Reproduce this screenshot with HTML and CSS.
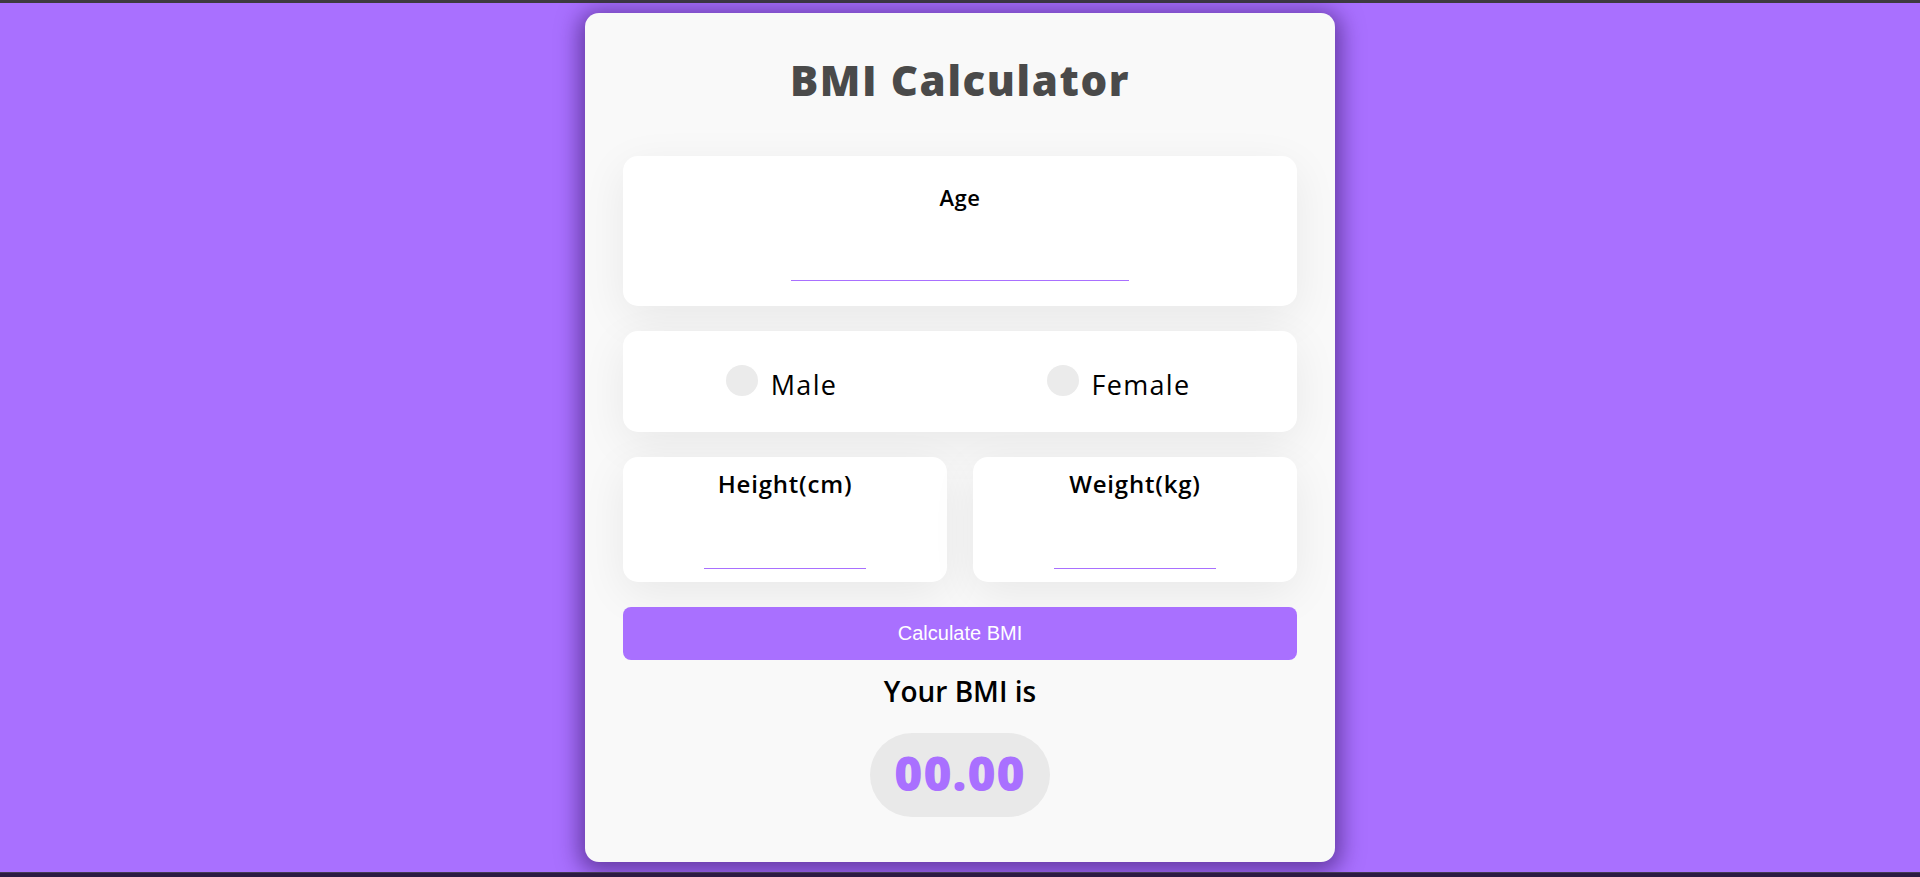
FILE: index.html
```html
<!DOCTYPE html>
<html lang="en">
<head>
<meta charset="utf-8">
<title>BMI Calculator</title>
<link rel="stylesheet" href="styles.css">
</head>
<body>
<div class="topbar"></div>
<main class="stage">
  <section class="card">
    <h1 class="title">BMI Calculator</h1>

    <div class="panel panel-age">
      <label class="field-label" for="age">Age</label>
      <input class="field-input field-wide" id="age" type="text">
    </div>

    <div class="panel panel-gender">
      <label class="gender-option">
        <span class="radio"></span>
        <span class="gender-text">Male</span>
      </label>
      <label class="gender-option">
        <span class="radio"></span>
        <span class="gender-text">Female</span>
      </label>
    </div>

    <div class="measure-row">
      <div class="panel panel-measure">
        <label class="field-label field-label-lg" for="height">Height(cm)</label>
        <input class="field-input field-narrow" id="height" type="text">
      </div>
      <div class="panel panel-measure">
        <label class="field-label field-label-lg" for="weight">Weight(kg)</label>
        <input class="field-input field-narrow" id="weight" type="text">
      </div>
    </div>

    <button class="calc-btn" type="button">Calculate BMI</button>

    <h3 class="result-title">Your BMI is</h3>
    <div class="result-wrap">
      <div class="result-pill">00.00</div>
    </div>
  </section>
</main>
<div class="bottombar"></div>
</body>
</html>
```

FILE: styles.css
```css
* {
  box-sizing: border-box;
}

html, body {
  margin: 0;
  padding: 0;
}

body {
  height: 100vh;
  display: flex;
  flex-direction: column;
  background: #a970ff;
  font-family: "Open Sans", "Noto Sans", sans-serif;
  overflow: hidden;
}

.topbar {
  height: 3px;
  background: #3d3b40;
  flex: none;
}

.bottombar {
  height: 5px;
  flex: none;
  background: #2c1a42;
  border-top: 1px solid #453a55;
}

.stage {
  flex: 1;
  display: flex;
  justify-content: center;
  align-items: flex-start;
  padding-top: 10px;
}

.card {
  width: 750px;
  height: 849px;
  background: #f9f9f9;
  border-radius: 14px;
  padding: 42px 38px 0;
  box-shadow: 0 4px 22px 6px rgba(45, 15, 90, 0.55);
  display: flex;
  flex-direction: column;
}

.title {
  margin: 0 0 51px;
  height: 50px;
  line-height: 50px;
  text-align: center;
  font-size: 42px;
  font-weight: 800;
  letter-spacing: 1.6px;
  color: #4a4a4a;
}

.panel {
  background: #ffffff;
  border-radius: 15px;
  box-shadow: 0 12px 45px rgba(0, 0, 0, 0.07);
}

.panel-age {
  height: 150px;
  padding-top: 27px;
  display: flex;
  flex-direction: column;
  align-items: center;
}

.field-label {
  display: block;
  height: 28px;
  line-height: 28px;
  font-size: 22px;
  font-weight: 600;
  letter-spacing: 0.6px;
  color: #000;
  text-align: center;
}

.field-label-lg {
  height: 30px;
  line-height: 30px;
  font-size: 24px;
  letter-spacing: 0.8px;
}

.field-input {
  display: block;
  height: 30px;
  border: none;
  border-bottom: 1px solid #a970ff;
  background: transparent;
  outline: none;
  font-family: inherit;
  font-size: 18px;
  text-align: center;
}

.field-wide {
  width: 338px;
  margin-top: 40px;
}

.field-narrow {
  width: 162px;
  margin-top: 40px;
}

.panel-gender {
  margin-top: 25px;
  height: 101px;
  padding-top: 6px;
  display: grid;
  grid-template-columns: 1fr 1fr;
  align-items: center;
}

.gender-option {
  justify-self: center;
  display: flex;
  align-items: center;
  margin-right: 20px;
  gap: 13px;
}

.radio {
  width: 32px;
  height: 31px;
  border-radius: 50%;
  background: #ebebeb;
  margin-bottom: 9px;
}

.gender-text {
  font-size: 27px;
  line-height: 36px;
  font-weight: 400;
  color: #000;
  letter-spacing: 1.3px;
}

.measure-row {
  margin-top: 25px;
  display: grid;
  grid-template-columns: 1fr 1fr;
  gap: 26px;
}

.panel-measure {
  height: 125px;
  padding-top: 12px;
  display: flex;
  flex-direction: column;
  align-items: center;
}

.calc-btn {
  margin-top: 25px;
  height: 53px;
  width: 100%;
  border: none;
  border-radius: 8px;
  background: #a970ff;
  color: #ffffff;
  font-family: "Liberation Sans", Arial, sans-serif;
  font-size: 20px;
  cursor: pointer;
}

.result-title {
  margin: 13px 0 0;
  height: 36px;
  line-height: 36px;
  text-align: center;
  font-size: 28px;
  font-weight: 600;
  color: #000;
}

.result-wrap {
  margin-top: 24px;
  display: flex;
  justify-content: center;
}

.result-pill {
  width: 180px;
  height: 84px;
  border-radius: 42px;
  background: #e9e9e9;
  color: #a970ff;
  font-size: 48px;
  font-weight: 800;
  letter-spacing: 1px;
  line-height: 79px;
  padding-bottom: 5px;
  text-align: center;
}
```
